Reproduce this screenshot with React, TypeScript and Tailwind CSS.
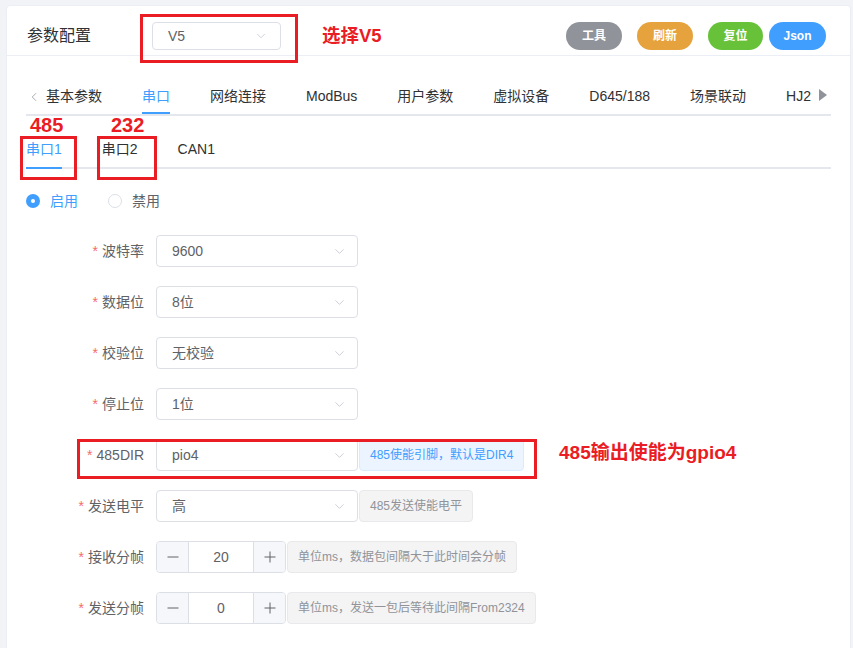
import React from "react";
import { ChevronDown, ChevronLeft } from "lucide-react";

const FONT = "font-['Liberation_Sans','Noto_Sans_CJK_SC',sans-serif]";

function Select({ value, w = "w-[202px]" }: { value: string; w?: string }) {
  return (
    <div
      className={`${w} h-[32px] shrink-0 flex items-center justify-between pl-[15px] pr-[10px] border border-[#dcdfe6] rounded-[4px] bg-white text-[14px] text-[#606266]`}
    >
      <span>{value}</span>
      <ChevronDown size={15} strokeWidth={1.3} className="text-[#c0c4cc]" />
    </div>
  );
}

function Hint({ text, blue }: { text: string; blue?: boolean }) {
  return (
    <div
      className={`h-[32px] flex items-center px-[10px] rounded-[4px] border text-[12px] ${
        blue
          ? "bg-[#ecf5ff] border-[#d9ecff] text-[#409eff]"
          : "bg-[#f4f4f5] border-[#e9e9eb] text-[#909399]"
      }`}
    >
      {text}
    </div>
  );
}

function NumberInput({ value }: { value: string }) {
  return (
    <div className="w-[130px] h-[32px] flex border border-[#dcdfe6] rounded-[4px] bg-white text-[14px] text-[#606266] overflow-hidden">
      <div className="w-[32px] flex items-center justify-center bg-[#f5f7fa] border-r border-[#dcdfe6]">
        <svg width="12" height="12" viewBox="0 0 12 12">
          <path d="M0.5 6 H11.5" stroke="#606266" strokeWidth="1" />
        </svg>
      </div>
      <div className="flex-1 flex items-center justify-center">{value}</div>
      <div className="w-[32px] flex items-center justify-center bg-[#f5f7fa] border-l border-[#dcdfe6]">
        <svg width="12" height="12" viewBox="0 0 12 12">
          <path d="M0.5 6 H11.5 M6 0.5 V11.5" stroke="#606266" strokeWidth="1" />
        </svg>
      </div>
    </div>
  );
}

function Row({ label, children }: { label: string; children: React.ReactNode }) {
  return (
    <div className="flex items-center h-[32px]">
      <div className="w-[130px] pr-[12px] text-right text-[14px] text-[#606266]">
        <span className="text-[#f56c6c] mr-[4px]">*</span>
        {label}
      </div>
      <div className="flex items-center">{children}</div>
    </div>
  );
}

export default function App() {
  const tabs = ["基本参数", "串口", "网络连接", "ModBus", "用户参数", "虚拟设备", "D645/188", "场景联动", "HJ2"];
  return (
    <div className={`relative w-[853px] h-[648px] overflow-hidden bg-[#f2f3f6] ${FONT}`}>
      <div className="mt-[5px] ml-[6px] w-[845px] h-[700px] bg-white border border-[#ebeef5] rounded-[4px]">
        {/* header */}
        <div className="flex items-center pl-[20px] pr-[24px] pt-[16px] pb-[5px] border-b border-[#ebeef5]">
          <div className="text-[16px] text-[#303133] w-[125px]">参数配置</div>
          <div className="w-[129px] h-[28px] flex items-center justify-between pl-[15px] pr-[12px] border border-[#dcdfe6] rounded-[4px] text-[14px] text-[#606266]">
            <span>V5</span>
            <ChevronDown size={14} strokeWidth={1.3} className="text-[#c0c4cc]" />
          </div>
          <div className="flex-1" />
          <div className="flex items-center text-[12px] text-white font-semibold">
            <div className="w-[56px] h-[28px] rounded-full bg-[#909399] flex items-center justify-center">工具</div>
            <div className="ml-[15px] w-[56px] h-[28px] rounded-full bg-[#e6a23c] flex items-center justify-center">刷新</div>
            <div className="ml-[15px] w-[55px] h-[28px] rounded-full bg-[#67c23a] flex items-center justify-center">复位</div>
            <div className="ml-[6px] w-[57px] h-[28px] rounded-full bg-[#409eff] flex items-center justify-center font-bold">Json</div>
          </div>
        </div>

        {/* body */}
        <div className="px-[19px] pt-[20px]">
          {/* main tabs */}
          <div className="relative h-[40px] border-b-2 border-[#e4e7ed] px-[20px]">
            <ChevronLeft size={14} strokeWidth={1.3} className="absolute left-[1px] top-[14px] text-[#909399]" />
            <svg className="absolute right-[4px] top-[13px]" width="8" height="12" viewBox="0 0 8 12">
              <path d="M0 0 L8 6 L0 12 Z" fill="#909399" />
            </svg>
            <div className="h-[38px] overflow-hidden flex whitespace-nowrap">
              {tabs.map((t, i) => (
                <div
                  key={t}
                  className={`relative shrink-0 h-[38px] pt-[3px] leading-[35px] text-[14px] ${i === 0 ? "pr-[20px]" : "px-[20px]"} ${
                    t === "串口" ? "text-[#409eff]" : "text-[#303133]"
                  }`}
                >
                  {t}
                  {t === "串口" && <div className="absolute left-[20px] right-[20px] bottom-0 h-[2px] bg-[#409eff]" />}
                </div>
              ))}
            </div>
          </div>

          {/* sub tabs */}
          <div className="mt-[13px] h-[40px] border-b-2 border-[#e4e7ed] flex">
            {["串口1", "串口2", "CAN1"].map((t, i) => (
              <div
                key={t}
                className={`relative h-[38px] pt-[3px] leading-[35px] text-[14px] ${i === 0 ? "pr-[20px]" : "px-[20px]"} ${
                  i === 0 ? "text-[#409eff]" : "text-[#303133]"
                }`}
              >
                {t}
                {i === 0 && <div className="absolute left-0 right-[20px] -bottom-[2px] h-[2px] bg-[#409eff]" />}
              </div>
            ))}
          </div>

          {/* radios */}
          <div className="mt-[22px] h-[20px] flex items-center text-[14px]">
            <div className="w-[14px] h-[14px] rounded-full bg-[#409eff] flex items-center justify-center">
              <div className="w-[4px] h-[4px] rounded-full bg-white" />
            </div>
            <span className="ml-[10px] text-[#409eff]">启用</span>
            <div className="ml-[30px] w-[14px] h-[14px] rounded-full border border-[#dcdfe6] bg-white" />
            <span className="ml-[10px] text-[#606266]">禁用</span>
          </div>

          {/* form */}
          <div className="mt-[24px] flex flex-col gap-[19px]">
            <Row label="波特率"><Select value="9600" /></Row>
            <Row label="数据位"><Select value="8位" /></Row>
            <Row label="校验位"><Select value="无校验" /></Row>
            <Row label="停止位"><Select value="1位" /></Row>
            <Row label="485DIR">
              <Select value="pio4" />
              <div className="ml-[1px]"><Hint text="485使能引脚，默认是DIR4" blue /></div>
            </Row>
            <Row label="发送电平">
              <Select value="高" />
              <div className="ml-[1px]"><Hint text="485发送使能电平" /></div>
            </Row>
            <Row label="接收分帧">
              <NumberInput value="20" />
              <div className="ml-[1px]"><Hint text="单位ms，数据包间隔大于此时间会分帧" /></div>
            </Row>
            <Row label="发送分帧">
              <NumberInput value="0" />
              <div className="ml-[1px]"><Hint text="单位ms，发送一包后等待此间隔From2324" /></div>
            </Row>
          </div>
        </div>
      </div>

      {/* red annotations (overlay) */}
      <div className="absolute left-[140px] top-[14px] w-[158px] h-[49px] border-[3px] border-[#ea1c24]" />
      <div className="absolute left-[322px] top-[24px] text-[18.5px] font-bold text-[#ea1c24] leading-[24px]">选择V5</div>

      <div className="absolute left-[20px] top-[136px] w-[57px] h-[44px] border-[3px] border-[#ea1c24]" />
      <div className="absolute left-[97px] top-[136px] w-[60px] h-[44px] border-[3px] border-[#ea1c24]" />
      <div className="absolute left-[30px] top-[113px] text-[20px] font-bold text-[#ea1c24] leading-[24px]">485</div>
      <div className="absolute left-[111px] top-[113px] text-[20px] font-bold text-[#ea1c24] leading-[24px]">232</div>

      <div className="absolute left-[77px] top-[439px] w-[460px] h-[40px] border-[3px] border-[#ea1c24]" />
      <div className="absolute left-[559px] top-[441px] text-[19px] font-bold text-[#ea1c24] leading-[24px]">485输出使能为gpio4</div>
    </div>
  );
}
